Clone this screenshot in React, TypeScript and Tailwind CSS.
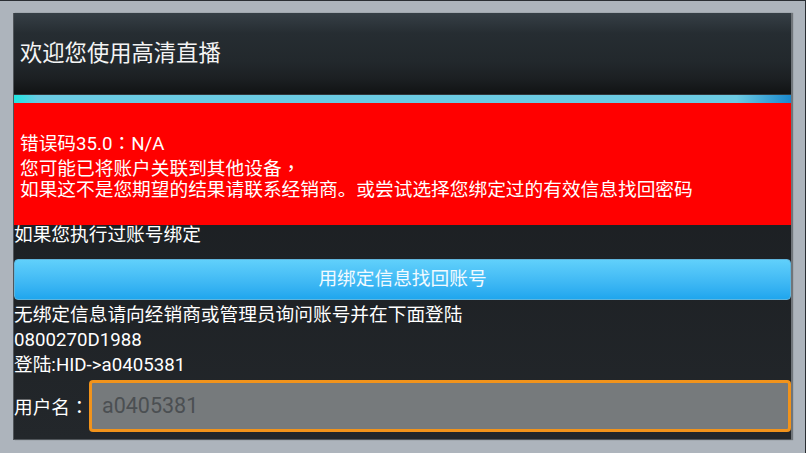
import React from "react";

const font = { fontFamily: 'Roboto, "Noto Sans CJK SC", sans-serif' };

function P({ c }: { c: string }) {
  return <span className="[font-family:'Noto_Sans_CJK_TC',sans-serif]">{c}</span>;
}

export default function App() {
  return (
    <div
      className="w-[806px] h-[453px] bg-[#adb4bc] border-t border-r border-[#2a2e33] overflow-hidden text-white"
      style={font}
    >
      <div className="ml-[13px] mt-[12px] w-[778px] h-[427px] flex flex-col bg-gradient-to-b from-[#171a1d] to-[#23272b] border-l border-b border-[#50555a] shadow-[2px_0_1px_rgba(0,0,0,0.35)]">
        <div className="h-[82px] flex items-center pl-[6px] bg-[linear-gradient(to_bottom,#363f46_0%,#262d32_25%,#22282c_60%,#1c2023_80%,#111314_100%)] border-b border-[#30363b]">
          <span className="text-[22.3px] leading-none text-[#f4f4f4]">欢迎您使用高清直播</span>
        </div>
        <div className="h-[8px] bg-[linear-gradient(to_right,#1ee6e1_0%,#6acae2_3%,#6ccae2_93%,#1a88cd_100%)]" />
        <div className="h-[122px] bg-[#ff0000] pl-[6px] pt-[28px] text-[18.7px] leading-[21.5px] text-white">
          <div>
            错误码35.0<P c="：" />N/A
          </div>
          <div>
            您可能已将账户关联到其他设备<P c="，" />
          </div>
          <div>如果这不是您期望的结果请联系经销商。或尝试选择您绑定过的有效信息找回密码</div>
        </div>
        <div className="text-[18.7px] leading-[20px]">如果您执行过账号绑定</div>
        <button className="mt-[14px] h-[41px] w-[777px] rounded-[4px] border border-[#5fb4dc] bg-gradient-to-b from-[#60d0fb] to-[#1ea6ee] text-[18.7px] text-[#f2faff] flex items-center justify-center">
          用绑定信息找回账号
        </button>
        <div className="mt-[3px] text-[18.7px] leading-[25px]">
          <div>无绑定信息请向经销商或管理员询问账号并在下面登陆</div>
          <div>0800270D1988</div>
          <div>登陆:HID-&gt;a0405381</div>
        </div>
        <div className="mt-[2px] flex items-center">
          <span className="w-[75px] text-[18.7px] leading-none pt-[2px]">
            用户名<P c="：" />
          </span>
          <div className="h-[52px] w-[702px] rounded-[4px] border-[3px] border-[#f1931b] bg-[#767a7c] flex items-center pl-[10px]">
            <span className="text-[21.5px] text-[#4b4f52]">a0405381</span>
          </div>
        </div>
      </div>
    </div>
  );
}
